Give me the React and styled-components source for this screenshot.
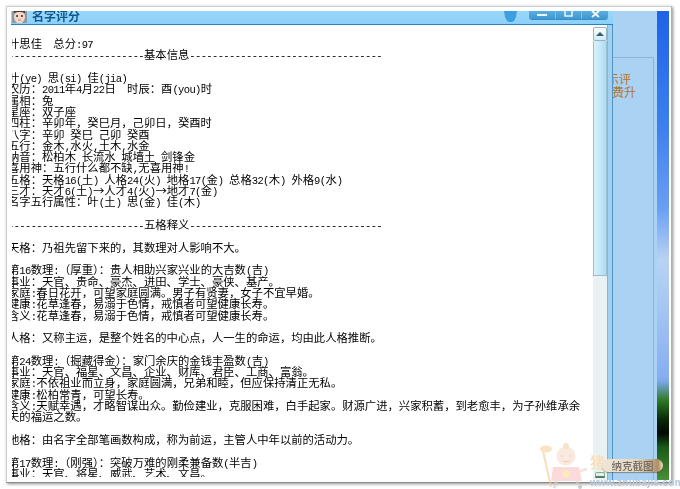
import React from 'react';
import styled, { createGlobalStyle } from 'styled-components';

const GlobalStyle = createGlobalStyle`
  html, body { margin: 0; padding: 0; background: #fff; }
  body { width: 680px; height: 489px; overflow: hidden; font-family: "Noto Sans CJK SC", sans-serif; }
`;

const Card = styled.div`
  position: relative;
  box-sizing: border-box;
  width: 666px;
  height: 477px;
  margin: 6px 0 0 6px;
  padding: 4px 2px 2px 4px;
  display: flex;
  background: #fff;
  border: 1px solid #d0d0d0;
  border-bottom-color: #8c8c8c;
  border-right-color: #b0b0b0;
  box-shadow: 1px 1px 3px rgba(0, 0, 0, 0.45);
`;

const Window = styled.div`
  width: 602px;
  display: flex;
  flex-direction: column;
  background: #fff;
`;

const TitleBar = styled.div`
  box-sizing: border-box;
  height: 14px;
  display: flex;
  align-items: flex-start;
  overflow: hidden;
  padding: 0 5px 0 1px;
  background: linear-gradient(#9ad8fb, #8cd0f8);
  border-bottom: 1px solid #2a82bd;
`;

const FaceIcon = styled.svg`
  width: 15px;
  height: 12px;
  flex: none;
`;

const Title = styled.span`
  margin: -2px 0 0 5px;
  font-size: 12px;
  line-height: 14px;
  font-weight: 700;
  color: #0f5a8c;
  filter: blur(0.3px);
`;

const Spacer = styled.div`
  flex: 1;
`;

const Badge = styled.svg`
  width: 13px;
  height: 11px;
  flex: none;
  margin-right: 12px;
`;

const WinButtons = styled.div`
  display: flex;
  width: 79px;
  height: 8px;
  border-radius: 0 0 3px 3px;
  overflow: hidden;
  background: linear-gradient(#5aaee0, #3f97cf);
  box-shadow: 0 1px 0 #3a8cc2;
`;

const WinButton = styled.div`
  flex: 1;
  display: flex;
  justify-content: center;
  border-left: ${p => (p.$first ? 'none' : '1px solid #7fbfe4')};
`;

const Body = styled.div`
  flex: 1;
  min-height: 0;
  display: flex;
`;

const TextPane = styled.div`
  flex: 1;
  min-width: 0;
  margin: 0 0 3px 1px;
  padding-top: 13px;
  overflow: hidden;
  filter: blur(0.25px);
`;

const TextBlock = styled.div`
  margin-left: -4px;
  width: 640px;
`;

const TextLine = styled.div`
  height: 11.32px;
  line-height: 11.32px;
  font-size: 11.33px;
  white-space: pre;
  color: #000;
`;

const Latin = styled.span`
  font-family: "Liberation Mono", monospace;
  font-size: 10.5px;
  letter-spacing: -0.635px;
`;

const ScrollBar = styled.div`
  width: 14px;
  flex: none;
  display: flex;
  flex-direction: column;
  margin-top: 2px;
  background: #e9f1f2;
`;

const UpButton = styled.div`
  box-sizing: border-box;
  height: 14px;
  display: flex;
  align-items: center;
  justify-content: center;
  border: 1px solid #8fb6c8;
  border-radius: 2px;
  background: linear-gradient(#fdfefe, #d4e8f2);
`;

const UpArrow = styled.div`
  width: 0;
  height: 0;
  border-left: 4px solid transparent;
  border-right: 4px solid transparent;
  border-bottom: 4px solid #2d5f74;
`;

const Thumb = styled.div`
  box-sizing: border-box;
  height: 235px;
  border: 1px solid #97c0d2;
  border-top: none;
  background: linear-gradient(90deg, #d9f0fb, #c4e8f8 50%, #aedaf2);
`;

const Track = styled.div`
  flex: 1;
  display: flex;
  flex-direction: column;
  justify-content: flex-end;
  align-items: center;
`;

const DownButton = styled.div`
  box-sizing: border-box;
  width: 10px;
  height: 6px;
  margin-bottom: 2px;
  border: 1px solid #7faf8f;
  border-radius: 2px 2px 0 0;
  border-bottom: 2px solid #5a7a6a;
  background: #dff0e4;
`;

const Gutter = styled.div`
  width: 6px;
  flex: none;
  box-sizing: border-box;
  background: #a3d0f0;
  border-right: 1px solid #4f94c4;
  border-left: 1px solid #7fb8dc;
`;

const SidePanel = styled.div`
  width: 44px;
  flex: none;
  display: flex;
  flex-direction: column;
  overflow: hidden;
  padding-top: 46px;
  box-sizing: border-box;
  background: #aad2f3;
`;

const SideBox = styled.div`
  flex: 1;
  box-sizing: border-box;
  margin-right: 3px;
  padding-top: 14px;
  border-top: 1px solid #8db4d2;
  border-right: 1px solid #8db4d2;
`;

const SideLine = styled.div`
  margin-left: ${p => p.$shift}px;
  font-size: 12px;
  line-height: 13px;
  color: #b5752f;
  white-space: nowrap;
`;

const Strip = styled.div`
  width: 12px;
  flex: none;
  background: linear-gradient(
    #1f62e6 0%,
    #3f80ee 25%,
    #6a9ef4 42%,
    #b9d2f2 53%,
    #a8c8f2 62%,
    #86aef0 78%,
    #7ba8e8 79%,
    #2f7a24 83%,
    #0a2a08 87%,
    #020802 90%,
    #1a5a18 93%,
    #4a9038 100%
  );
`;

const Mascot = styled.svg`
  position: absolute;
  left: 532px;
  top: 436px;
  width: 52px;
  height: 46px;
  opacity: 0.6;
  filter: blur(0.7px);
`;

const PigChar = styled.span`
  position: absolute;
  left: 583px;
  top: 446px;
  font-size: 15px;
  line-height: 18px;
  font-weight: 700;
  color: #f9e0bc;
  filter: blur(0.5px);
`;

const Pill = styled.div`
  position: absolute;
  left: 595px;
  top: 452px;
  width: 61px;
  height: 13px;
  display: flex;
  align-items: center;
  justify-content: center;
  border-radius: 7px;
  font-size: 10.5px;
  line-height: 13px;
  font-weight: 500;
  color: #6f6a64;
  background: linear-gradient(90deg, #f0e6d4, #e2d6c0 60%, #b08e66 92%, #efe2cc);
  box-shadow: 0 1px 1px rgba(90, 60, 30, 0.5);
  filter: blur(0.35px);
`;

const SiteMark = styled.span`
  position: absolute;
  left: 583px;
  top: 470px;
  font-family: "Liberation Sans", sans-serif;
  font-size: 10px;
  line-height: 11px;
  font-weight: 700;
  letter-spacing: 0.3px;
  color: #b6c8da;
  filter: blur(0.4px);
`;

const rule = (name, left, right) => '-'.repeat(left) + name + '-'.repeat(right);

// ; | [ ] stand for the full width colon, comma and brackets of the source text
const wide = text =>
  text
    .replace(/;/g, '\uFF1A')
    .replace(/\|/g, '\uFF0C')
    .replace(/\[/g, '\uFF08')
    .replace(/\]/g, '\uFF09');

const LINES = [
  '叶思佳  总分:97',
  rule('基本信息', 24, 34),
  '',
  '叶(ye) 思(si) 佳(jia)',
  '农历;2011年4月22日  时辰;酉(you)时',
  '属相;兔',
  '星座;双子座',
  '四柱;辛卯年|癸巳月|己卯日|癸酉时',
  '八字;辛卯 癸巳 己卯 癸酉',
  '五行;金木,水火,土木,水金',
  '纳音;松柏木 长流水 城墙土 剑锋金',
  '喜用神;五行什么都不缺,无喜用神!',
  '五格;天格16(土) 人格24(火) 地格17(金) 总格32(木) 外格9(水)',
  '三才;天才6(土)→人才4(火)→地才7(金)',
  '名字五行属性;叶(土) 思(金) 佳(木)',
  '',
  rule('五格释义', 24, 34),
  '',
  '天格;乃祖先留下来的|其数理对人影响不大。',
  '',
  '第16数理:[厚重];贵人相助兴家兴业的大吉数(吉)',
  '事业;天官、贵命、豪杰、进田、学士、豪侠、基产。',
  '家庭:春日花开|可望家庭圆满。男子有贤妻|女子不宜早婚。',
  '健康:花草逢春|易溺于色情|戒慎者可望健康长寿。',
  '含义:花草逢春|易溺于色情|戒慎者可望健康长寿。',
  '',
  '人格;又称主运|是整个姓名的中心点|人一生的命运|均由此人格推断。',
  '',
  '第24数理:[掘藏得金];家门余庆的金钱丰盈数(吉)',
  '事业;天官、福星、文昌、企业、财库、君臣、工商、富翁。',
  '家庭:不依祖业而立身|家庭圆满|兄弟和睦|但应保持清正无私。',
  '健康:松柏常青|可望长寿。',
  '含义:天赋幸遇|才略智谋出众。勤俭建业|克服困难|白手起家。财源广进|兴家积蓄|到老愈丰|为子孙维承余',
  '夫的福运之数。',
  '',
  '地格;由名字全部笔画数构成|称为前运|主管人中年以前的活动力。',
  '',
  '第17数理:[刚强];突破万难的刚柔兼备数(半吉)',
  '事业;天官、将星、威武、艺术、文昌。',
].map(wide);

// SimSun-style half width latin: the mono face is tightened so its advance is half the CJK em
const renderLine = text =>
  text.split(/([\x20-\x7e]+)/).map((part, i) =>
    /^[\x20-\x7e]+$/.test(part) ? <Latin key={i}>{part}</Latin> : part
  );

export default function App() {
  return (
    <>
      <GlobalStyle />
      <Card>
        <Window>
          <TitleBar>
            <FaceIcon viewBox="0 0 15 12">
              <rect width="15" height="12" fill="#8a9aa8" />
              <ellipse cx="7.5" cy="6" rx="5.5" ry="6.5" fill="#f3d6c4" />
              <path d="M2 0h11v2c-3-1.5-8-1.5-11 0z" fill="#4a3a34" />
              <circle cx="5" cy="5" r="1" fill="#3a2a2a" />
              <circle cx="10" cy="5" r="1" fill="#3a2a2a" />
              <path d="M6 9h3" stroke="#c87a70" strokeWidth="1" />
            </FaceIcon>
            <Title>名字评分</Title>
            <Spacer />
            <Badge viewBox="0 0 13 11">
              <path d="M0 0h13l-1 6-2 4-2 1H5L3 10 1 6z" fill="#3d9fe2" />
            </Badge>
            <WinButtons>
              <WinButton $first>
                <svg width="10" height="8"><rect x="0" y="3" width="10" height="2" fill="#e8f6ff" /></svg>
              </WinButton>
              <WinButton>
                <svg width="9" height="8"><path d="M1 0v5h7V0" fill="none" stroke="#e8f6ff" strokeWidth="1.5" /></svg>
              </WinButton>
              <WinButton>
                <svg width="9" height="8"><path d="M1 0l7 6M8 0L1 6" stroke="#f2faff" strokeWidth="1.8" /></svg>
              </WinButton>
            </WinButtons>
          </TitleBar>
          <Body>
            <TextPane>
              <TextBlock>
                {LINES.map((line, i) => (
                  <TextLine key={i}>{renderLine(line)}</TextLine>
                ))}
              </TextBlock>
            </TextPane>
            <ScrollBar>
              <UpButton><UpArrow /></UpButton>
              <Thumb />
              <Track><DownButton /></Track>
            </ScrollBar>
            <Gutter />
          </Body>
        </Window>
        <SidePanel>
          <SideBox>
            <SideLine $shift={-6}>示评</SideLine>
            <SideLine $shift={-1}>费升</SideLine>
          </SideBox>
        </SidePanel>
        <Strip />
        <Mascot viewBox="0 0 52 46">
          <path d="M4 8l8 36" stroke="#f6c98e" strokeWidth="2" />
          <ellipse cx="7" cy="6" rx="6" ry="3.5" fill="#f7cf9c" />
          <path d="M14 24h26l3 14H12z" fill="#f8c4c0" />
          <circle cx="27" cy="31" r="3.5" fill="#f6e08a" />
          <circle cx="27" cy="13" r="9.5" fill="#f7dccb" />
          <circle cx="27" cy="3" r="3" fill="#f5cfa8" />
          <path d="M22 13h2M30 13h2M24 18c2 1 4 1 6 0" stroke="#d8a890" strokeWidth="1" fill="none" />
          <path d="M41 28l7-2" stroke="#f2d6c4" strokeWidth="3" />
          <path d="M18 38l-3 7M38 38l1 4" stroke="#cfcfcf" strokeWidth="3" />
          <circle cx="41" cy="44" r="2" fill="#a8a8a8" />
        </Mascot>
        <PigChar>猪</PigChar>
        <Pill>纳克截图</Pill>
        <SiteMark>www.zhubajie.com</SiteMark>
      </Card>
    </>
  );
}
